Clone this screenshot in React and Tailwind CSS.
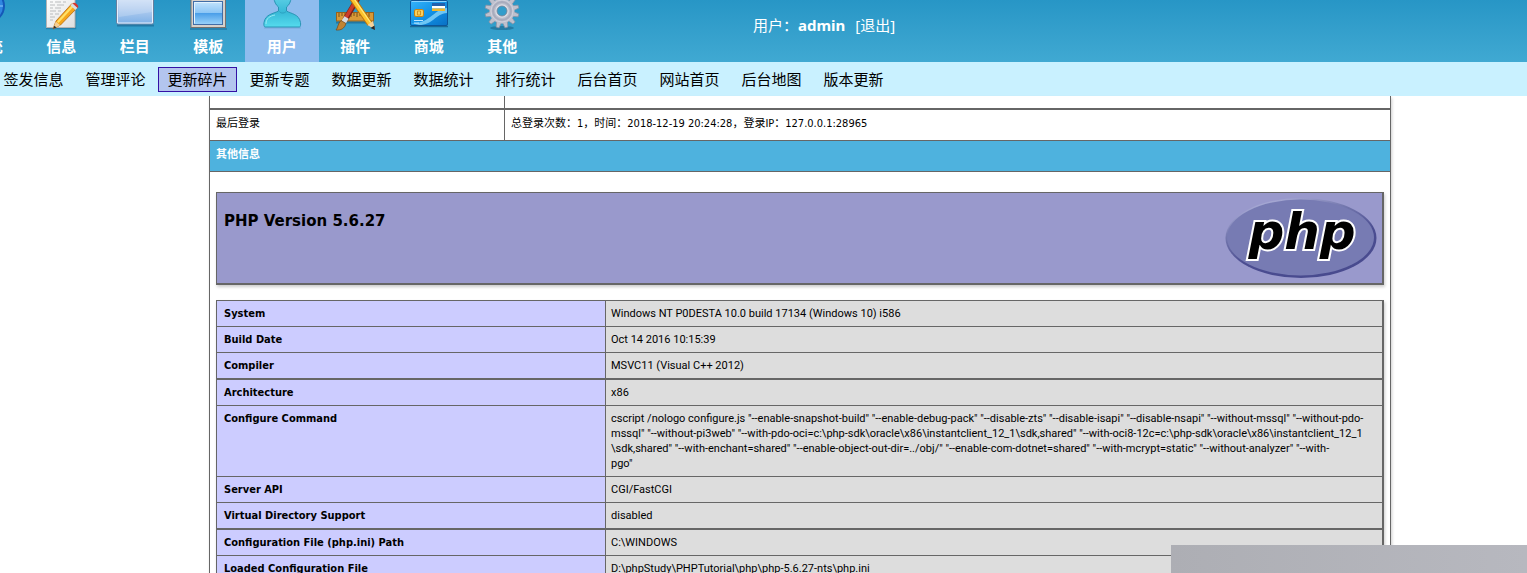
import React from "react";

const latin = "font-['DejaVu_Sans_Condensed','Noto_Sans','Noto_Sans_CJK_SC',sans-serif]";

function GlobeIcon() {
  return (
    <svg width="48" height="32" viewBox="0 0 48 32" aria-hidden="true">
      <circle cx="24" cy="6" r="17" fill="#1558b8" />
      <circle cx="24" cy="6" r="15" fill="#2f86e0" />
      <path d="M24 -9v30M9 6h30M24 -9c12 8 12 22 0 30c-12-8-12-22 0-30" fill="none" stroke="#8cc8ff" />
    </svg>
  );
}

function NoteIcon() {
  return (
    <svg width="48" height="32" viewBox="0 0 48 32" aria-hidden="true">
      <defs>
        <linearGradient id="paper" x1="0" y1="0" x2="1" y2="1">
          <stop offset="0" stopColor="#ffffff" />
          <stop offset="1" stopColor="#dedede" />
        </linearGradient>
      </defs>
      <path d="M9 28.5h29.5v-28" fill="none" stroke="#1f6f96" strokeWidth="1.5" opacity=".6" />
      <path d="M9.500-2h28.500v29.500h-28.500z" fill="url(#paper)" stroke="#b4b4b4" />
      <path d="M13 2h3m2 0h6m2 0h3M13 5h5m2 0h7M13 8h3m2 0h6M13 11h6m2 0h3M13 14h3m2 0h4M13 17h5M13 20h3" stroke="#b9bbbe" strokeWidth="1.2" />
      <path d="M16 29l3-8L35 3.500l5 4.500L23.500 25z" fill="#f6a61b" stroke="#b8690c" strokeWidth=".8" />
      <path d="M20 21.500L35.500 4.500l1.700 1.500L21.500 23z" fill="#ffe067" />
      <path d="M33.500 5.500l2-2.200 5 4.500-2 2.200z" fill="#d9dce0" />
      <path d="M35.500 3.300c2-2.300 7.500 2.300 5.200 4.600z" fill="#d8352b" />
      <path d="M16 29l2.800-7.500 4.400 3.700z" fill="#f3cf96" />
      <path d="M16 29l1.300-3.300 2.200 1.700z" fill="#333" />
    </svg>
  );
}

function PanelIcon() {
  return (
    <svg width="48" height="32" viewBox="0 0 48 32" aria-hidden="true">
      <defs>
        <linearGradient id="panel" x1="0" y1="0" x2="0" y2="1">
          <stop offset="0" stopColor="#d7e5f8" />
          <stop offset=".45" stopColor="#b4cef0" />
          <stop offset="1" stopColor="#7eb0e6" />
        </linearGradient>
      </defs>
      <path d="M6 25.500h37" stroke="#175c88" strokeWidth="2" opacity=".55" />
      <rect x="5.500" y="-5" width="37" height="29" rx="1.500" fill="url(#panel)" stroke="#687f9e" />
      <path d="M6.500 -3v26h35v-26" fill="none" stroke="#e5f0fd" />
      <path d="M8 0h33v12L8 17z" fill="#fff" opacity=".18" />
    </svg>
  );
}

function FrameIcon() {
  return (
    <svg width="48" height="32" viewBox="0 0 48 32" aria-hidden="true">
      <defs>
        <linearGradient id="sky" x1="0" y1="0" x2="0" y2="1">
          <stop offset="0" stopColor="#c3e3fc" />
          <stop offset=".5" stopColor="#8bc5f5" />
          <stop offset=".52" stopColor="#4b9fe9" />
          <stop offset="1" stopColor="#9bd3fa" />
        </linearGradient>
      </defs>
      <path d="M6 29h37" stroke="#175c88" strokeWidth="1.500" opacity=".55" />
      <rect x="7" y="-5" width="34.500" height="32.500" fill="#d6d1cc" stroke="#77716e" />
      <rect x="9.500" y="1.500" width="29" height="23" fill="url(#sky)" stroke="#426da6" />
      <path d="M10.500 2.500h27M10.500 2.500v21" stroke="#e3f3ff" />
    </svg>
  );
}

function UserIcon() {
  return (
    <svg width="48" height="32" viewBox="0 0 48 32" aria-hidden="true">
      <defs>
        <linearGradient id="person" x1="0" y1="0" x2="0" y2="1">
          <stop offset="0" stopColor="#5ccfe5" />
          <stop offset=".5" stopColor="#37b9d7" />
          <stop offset="1" stopColor="#55dbed" />
        </linearGradient>
      </defs>
      <path d="M6 28h37" stroke="#4779ae" strokeWidth="1" opacity=".3" />
      <path d="M16-3c0 5 2 8 4.500 10v4C15 14 7.500 14 6 22.500c-.3 2 0 4.500 1 4.500h34.500c1 0 1.300-2.500 1-4.500C41 14 33.500 14 28.500 11V7C31 5 33 2 33-3z" fill="url(#person)" stroke="#2994b4" />
      <path d="M21.500 11.500c1 2 5 2 6.500 0" fill="none" stroke="#2aa1c0" />
      <path d="M8 24c0-6 4-8 9-9" fill="none" stroke="#98ecf5" />
    </svg>
  );
}

function ToolsIcon() {
  return (
    <svg width="48" height="32" viewBox="0 0 48 32" aria-hidden="true">
      <path d="M5 22.500h38" stroke="#17618a" strokeWidth="2" opacity=".6" />
      <rect x="5.500" y="12.500" width="37" height="8.500" fill="#d99a37" stroke="#96621e" />
      <path d="M8 13v4m3-4v3m3-3v4m3-4v3m3-3v4m3-4v3m3-3v4m3-4v3m3-3v4m3-4v3m3-3v4" stroke="#76501d" />
      <path d="M27.500-3L14 20" stroke="#7f2018" strokeWidth="5.500" />
      <path d="M27-3L13.500 20" stroke="#cb3c2a" strokeWidth="3.500" />
      <path d="M15.500 17.500l-3 5" stroke="#d7dce2" strokeWidth="5" />
      <path d="M10 20.500l5 3c-1.500 5-5 7-10 6.500c2-2 1.500-6 5-9.500z" fill="#c18434" stroke="#774516" strokeWidth=".7" />
      <path d="M21-2l18 26" stroke="#bf760c" strokeWidth="6" />
      <path d="M21-2l18 26" stroke="#ffc42d" strokeWidth="4" />
      <path d="M22.500-2l17 24.500" stroke="#ffe77c" strokeWidth="1.300" />
      <path d="M36.500 25l5.500-4 2 8.500z" fill="#f5d29b" />
      <path d="M39.500 28l4-2.500.5 4.500z" fill="#282828" />
    </svg>
  );
}

function CardIcon() {
  return (
    <svg width="48" height="32" viewBox="0 0 48 32" aria-hidden="true">
      <defs>
        <linearGradient id="card" x1="0" y1="0" x2="1" y2="1">
          <stop offset="0" stopColor="#36b4fa" />
          <stop offset=".5" stopColor="#1292e6" />
          <stop offset="1" stopColor="#0970c4" />
        </linearGradient>
      </defs>
      <path d="M5 26.500h38" stroke="#10537f" strokeWidth="1.500" opacity=".7" />
      <rect x="5.500" y=".5" width="37" height="25" rx="1.500" fill="url(#card)" stroke="#0c5598" />
      <path d="M6 23C24 25 30 8 42 8v5C30 14 28 25 14 25z" fill="#8ddafc" opacity=".75" />
      <path d="M6.500 1.500h35" stroke="#88d3ff" />
      <rect x="27" y="3" width="13" height="3" fill="#2260ad" />
      <rect x="27" y="6" width="13" height="2.500" fill="#ffffff" />
      <rect x="27" y="8.500" width="13" height="2.500" fill="#f1b72a" />
      <rect x="9.500" y="9.500" width="9" height="7" rx="1.500" fill="#f9cf5d" stroke="#c98512" />
      <path d="M12.500 11v4h3v-4z" fill="none" stroke="#c98512" strokeWidth=".8" />
      <path d="M9 20.500h9M9 23h5" stroke="#bde6ff" />
    </svg>
  );
}

function GearIcon() {
  const teeth = [0, 30, 60, 90, 120, 150, 180, 210, 240, 270, 300, 330];
  return (
    <svg width="48" height="32" viewBox="0 0 48 32" aria-hidden="true">
      <ellipse cx="24" cy="28" rx="12" ry="2" fill="#15577c" opacity=".5" />
      <g fill="#bfc1cd" stroke="#8d92a3" strokeWidth=".7">
        {teeth.map((a) => (
          <path key={a} d="M21.500 0l1-6h3l1 6z" transform={`rotate(${a + 15} 24 11)`} />
        ))}
      </g>
      <circle cx="24" cy="11" r="12.500" fill="#bdbfcc" />
      <circle cx="24" cy="11" r="9" fill="none" stroke="#a9acbd" strokeWidth="2" />
      <circle cx="24" cy="11" r="11" fill="none" stroke="#d0d1dc" strokeWidth="1" />
      <circle cx="24" cy="11" r="6" fill="none" stroke="#dcdde6" strokeWidth="1.500" />
      <circle cx="24" cy="11" r="5" fill="#339dcb" stroke="#7f8596" strokeWidth=".8" />
    </svg>
  );
}

function PhpLogo() {
  const word = {
    x: 77,
    y: 52,
    textAnchor: "middle",
    fontFamily: "DejaVu Sans, sans-serif",
    fontWeight: "bold",
    fontStyle: "oblique",
    fontSize: 50,
    strokeLinejoin: "miter",
  };
  return (
    <svg width="152" height="82" viewBox="0 0 152 82" role="img" aria-label="PHP logo">
      <defs>
        <linearGradient id="rim" x1=".25" y1="0" x2=".75" y2="1">
          <stop offset="0" stopColor="#b0b2db" />
          <stop offset=".3" stopColor="#7377ad" />
          <stop offset=".6" stopColor="#4b4d91" />
          <stop offset="1" stopColor="#484a8e" />
        </linearGradient>
      </defs>
      <ellipse cx="76" cy="41" rx="75.500" ry="40" fill="url(#rim)" />
      <ellipse cx="75.500" cy="40.500" rx="73.500" ry="38" fill="#777bb3" />
      <text {...word} fill="#000" stroke="#fff" strokeWidth="4" paintOrder="stroke">
        php
      </text>
    </svg>
  );
}

const modules = [
  { label: "系统", Icon: GlobeIcon },
  { label: "信息", Icon: NoteIcon },
  { label: "栏目", Icon: PanelIcon },
  { label: "模板", Icon: FrameIcon },
  { label: "用户", Icon: UserIcon, active: true },
  { label: "插件", Icon: ToolsIcon },
  { label: "商城", Icon: CardIcon },
  { label: "其他", Icon: GearIcon },
];

const shortcuts = [
  "签发信息", "管理评论", "更新碎片", "更新专题", "数据更新", "数据统计",
  "排行统计", "后台首页", "网站首页", "后台地图", "版本更新",
];

const info = [
  { name: "System", value: "Windows NT P0DESTA 10.0 build 17134 (Windows 10) i586" },
  { name: "Build Date", value: "Oct 14 2016 10:15:39" },
  { name: "Compiler", value: "MSVC11 (Visual C++ 2012)", thick: true },
  { name: "Architecture", value: "x86" },
  {
    name: "Configure Command",
    lines: [
      'cscript /nologo configure.js "--enable-snapshot-build" "--enable-debug-pack" "--disable-zts" "--disable-isapi" "--disable-nsapi" "--without-mssql" "--without-pdo-',
      'mssql" "--without-pi3web" "--with-pdo-oci=c:\\php-sdk\\oracle\\x86\\instantclient_12_1\\sdk,shared" "--with-oci8-12c=c:\\php-sdk\\oracle\\x86\\instantclient_12_1',
      '\\sdk,shared" "--with-enchant=shared" "--enable-object-out-dir=../obj/" "--enable-com-dotnet=shared" "--with-mcrypt=static" "--without-analyzer" "--with-',
      'pgo"',
    ],
  },
  { name: "Server API", value: "CGI/FastCGI" },
  { name: "Virtual Directory Support", value: "disabled", thick: true },
  { name: "Configuration File (php.ini) Path", value: "C:\\WINDOWS" },
  { name: "Loaded Configuration File", value: "D:\\phpStudy\\PHPTutorial\\php\\php-5.6.27-nts\\php.ini" },
];

function PhpInfo() {
  return (
    <div className="px-1.5 pt-5">
      <div className="flex h-[93px] items-start justify-between border border-r-2 border-b-2 border-[#666] bg-[#9999cc] pt-1 pr-[5px] pl-[7px] shadow-[1px_2px_3px_#ccc]">
        <h1 className="pt-3 font-['DejaVu_Sans',sans-serif] text-[15px] leading-6 font-bold">PHP Version 5.6.27</h1>
        <PhpLogo />
      </div>
      <table className="mt-[15px] w-full table-fixed border-separate border-spacing-0 border-t border-r-2 border-l border-[#666] text-left align-top shadow-[1px_2px_3px_#ccc]">
        <colgroup>
          <col className="w-[389px]" />
          <col />
        </colgroup>
        <tbody>
          {info.map((row) => (
            <tr key={row.name} className={row.thick ? "*:border-b-2" : "*:border-b"}>
              <th scope="row" className="border-r border-[#666] bg-[#ccccff] px-[7px] py-[5px] align-top font-bold">
                {row.name}
              </th>
              <td className="border-[#666] bg-[#dddddd] px-[5px] py-[5px] align-top font-['Roboto',sans-serif] whitespace-nowrap">
                {row.lines ? row.lines.map((l) => <div key={l}>{l}</div>) : row.value}
              </td>
            </tr>
          ))}
        </tbody>
      </table>
    </div>
  );
}

export default function App() {
  return (
    <div className={`relative flex h-screen flex-col overflow-hidden bg-white text-[11px] leading-[15px] text-black ${latin}`}>
      <header className="flex h-[62px] shrink-0 bg-linear-to-b from-[#2796c6] to-[#40a9d2] font-['Noto_Sans','Noto_Sans_CJK_SC',sans-serif] text-[15px] text-white">
        <nav className="-ml-[49px] grid w-[588px] shrink-0 grid-cols-8">
          {modules.map(({ label, Icon, active }) => (
            <a
              key={label}
              href="#"
              className={`flex flex-col items-center leading-5 font-bold ${active ? "bg-[#8ebcee]" : ""}`}
            >
              <Icon />
              <span className="pt-1">{label}</span>
            </a>
          ))}
        </nav>
        <p className="ml-[214px] pt-[15px] leading-5 whitespace-nowrap">
          用户：<b>admin</b>
          <a href="#" className="ml-2.5">[退出]</a>
        </p>
      </header>

      <nav className="-ml-1.5 flex h-[34px] shrink-0 items-center gap-[3px] bg-[#c9f1ff] text-[15px] leading-5">
        {shortcuts.map((label) => (
          <a
            key={label}
            href="#"
            className={`flex h-[25px] w-[79px] shrink-0 items-center justify-center border pt-0.5 whitespace-nowrap ${
              label === "更新碎片" ? "border-[#3311a5] bg-[#b3c5ee]" : "border-transparent"
            }`}
          >
            {label}
          </a>
        ))}
      </nav>

      <main className="min-h-0 flex-1 pr-[136px] pl-[209px]">
        <div className="border-x border-[#666] shadow-[1px_2px_3px_#ccc]">
          <table className="w-full table-fixed border-separate border-spacing-0 text-left">
            <colgroup>
              <col className="w-1/4" />
              <col className="w-3/4" />
            </colgroup>
            <tbody>
              <tr>
                <td className="h-3.5 border-r border-b-2 border-[#666]" />
                <td className="h-3.5 border-b-2 border-[#666]" />
              </tr>
              <tr>
                <td className="h-[31px] border-r border-b border-[#666] px-1.5 pb-1">最后登录</td>
                <td className="h-[31px] border-b border-[#666] px-1.5 pb-1">
                  总登录次数：1，时间：2018-12-19 20:24:28，登录IP：127.0.0.1:28965
                </td>
              </tr>
              <tr>
                <th colSpan={2} className="h-[31px] border-b border-[#666] bg-[#4eb2de] px-1.5 pb-1 font-bold text-white">
                  其他信息
                </th>
              </tr>
            </tbody>
          </table>
          <PhpInfo />
        </div>
      </main>

      <div className="absolute right-0 bottom-0 h-7 w-[356px] bg-linear-to-r from-[#adaeb4] to-[#b7b8bf]" />
    </div>
  );
}
